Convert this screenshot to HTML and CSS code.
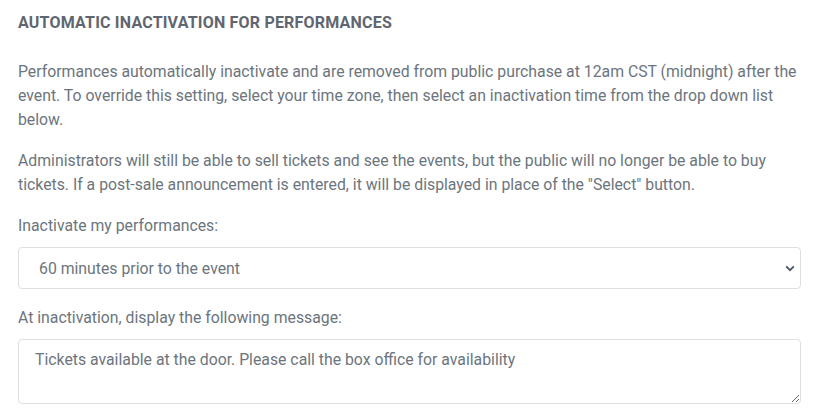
FILE: index.html
```html
<!DOCTYPE html>
<html>
<head>
<meta charset="utf-8">
<link rel="stylesheet" href="styles.css">
</head>
<body>
<section class="panel">
  <h2 class="title">AUTOMATIC INACTIVATION FOR PERFORMANCES</h2>
  <p class="text">Performances automatically inactivate and are removed from public purchase at 12am CST (midnight) after the event. To override this setting, select your time zone, then select an inactivation time from the drop down list below.</p>
  <p class="text">Administrators will still be able to sell tickets and see the events, but the public will no longer be able to buy tickets. If a post-sale announcement is entered, it will be displayed in place of the "Select" button.</p>
  <label class="label" for="inact">Inactivate my performances:</label>
  <div class="select-wrap">
    <select id="inact" class="select">
      <option>60 minutes prior to the event</option>
    </select>
    <svg class="chev" width="10" height="7" viewBox="0 0 10 7"><path d="M1.2 1.4 L5 5.2 L8.8 1.4" fill="none" stroke="#4b5563" stroke-width="1.8"/></svg>
  </div>
  <label class="label" for="msg">At inactivation, display the following message:</label>
  <textarea id="msg" class="textarea">Tickets available at the door. Please call the box office for availability</textarea>
</section>
</body>
</html>
```
FILE: styles.css
```css
html, body {
  margin: 0;
  padding: 0;
  background: #ffffff;
}
body {
  font-family: Roboto, "Liberation Sans", sans-serif;
  color: #6c757d;
}
.panel {
  padding: 13px 17px 0 18px;
}
.title {
  margin: 0;
  font-size: 16px;
  font-weight: 700;
  line-height: 20px;
  color: #5f6670;
  letter-spacing: 0.2px;
}
.text {
  margin: 27px 0 17px 0;
  font-size: 15.8px;
  line-height: 24px;
}
.text + .text {
  margin-top: 0;
}
.label {
  display: block;
  font-size: 15.8px;
  line-height: 24px;
  margin: 0 0 9px 0;
}
.select-wrap {
  position: relative;
  margin-bottom: 17px;
}
.select {
  display: block;
  width: 100%;
  height: 42px;
  box-sizing: border-box;
  border: 1px solid #dcdfe3;
  border-radius: 4px;
  background: #fff;
  padding: 0 40px 0 20px;
  font-family: Roboto, "Liberation Sans", sans-serif;
  font-size: 15.8px;
  color: #6c757d;
  -webkit-appearance: none;
  appearance: none;
}
.chev {
  position: absolute;
  right: 6px;
  top: 18px;
  pointer-events: none;
}
.textarea {
  display: block;
  width: 100%;
  height: 65px;
  box-sizing: border-box;
  border: 1px solid #dcdfe3;
  border-radius: 4px;
  padding: 10px 16px;
  font-family: Roboto, "Liberation Sans", sans-serif;
  font-size: 15.8px;
  line-height: 20px;
  color: #6c757d;
  resize: vertical;
}
```
